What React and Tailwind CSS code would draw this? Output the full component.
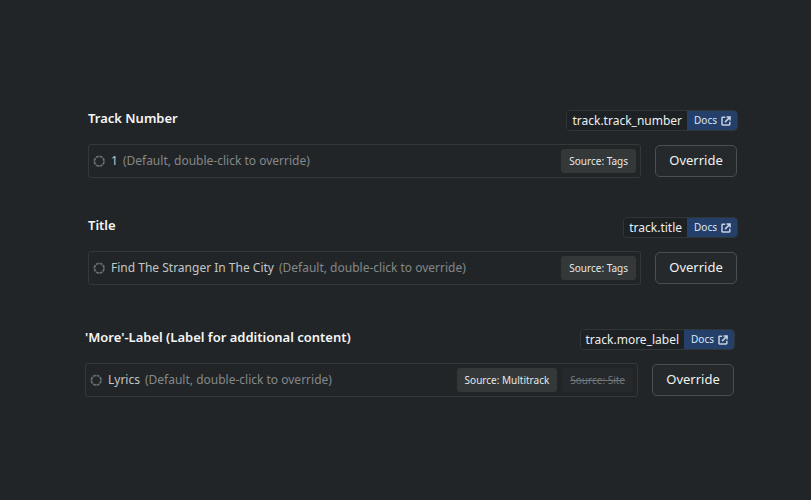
import React, { useState } from 'react';

const FIELDS = [
  {
    id: 'track_number',
    label: 'Track Number',
    value: '1',
    sources: [{ name: 'Tags', active: true }],
    className: 'pl-[88px] pr-[73px]',
  },
  {
    id: 'title',
    label: 'Title',
    value: 'Find The Stranger In The City',
    sources: [{ name: 'Tags', active: true }],
    className: 'pl-[88px] pr-[73px] mt-[39px]',
  },
  {
    id: 'more_label',
    label: "'More'-Label (Label for additional content)",
    value: 'Lyrics',
    sources: [{ name: 'Multitrack', active: true }, { name: 'Site', active: false }],
    className: 'pl-[85px] pr-[76px] mt-[44px]',
  },
];

const DashedCircle = () => (
  <svg className="shrink-0 text-[#6b6e70]" width="12" height="12" viewBox="0 0 12 12" fill="none" stroke="currentColor" strokeWidth="1.8" aria-hidden="true">
    <circle cx="6.2" cy="6.2" r="4.8" pathLength="80" strokeDasharray="8 2" strokeDashoffset="-1" />
  </svg>
);

const ExternalIcon = () => (
  <svg className="shrink-0 text-[#c5d0e0]" width="10" height="10" viewBox="0 0 10 10" fill="none" stroke="currentColor" strokeWidth="1.5" aria-hidden="true">
    <path d="M4.2 1.2H1.6a.6.6 0 0 0-.6.6v6.6a.6.6 0 0 0 .6.6h6.6a.6.6 0 0 0 .6-.6V5.8" />
    <path d="M5.5 1h3.6v3.6M9 1.1 4 6.1" />
  </svg>
);

const SourceBadge = ({ name, active }) => (
  <span className={`flex h-6 items-center rounded-[3px] px-2 text-[10px] ${active ? 'bg-[#343838] text-[#e6e8e9]' : 'bg-[#25292b] text-[#747779] line-through'}`}>
    Source: {name}
  </span>
);

const FieldRow = ({ field, onOverride }) => (
  <section className={field.className}>
    <div className="flex h-[21px] items-center justify-between">
      <h2 id={`${field.id}-label`} className="pb-1 text-[13px] leading-[17px] font-semibold text-[#f5f6f7]">{field.label}</h2>
      <div className="flex h-[21px] overflow-hidden rounded-[4px] border border-[#303538]">
        <code className="flex items-center bg-[#1d2123] px-[5px] font-['Noto_Sans',sans-serif] text-[12px] text-[#eceeef]">track.{field.id}</code>
        <a href={`#${field.id}`} className="-my-px -mr-px flex items-center gap-1 bg-[#243f69] px-[7px] text-[10px] text-[#dfe7f3]">
          Docs
          <ExternalIcon />
        </a>
      </div>
    </div>

    <div className="mt-[13px] flex items-center gap-[14px] pr-px">
      <div
        role="group"
        aria-labelledby={`${field.id}-label`}
        onDoubleClick={onOverride}
        className="flex h-[34px] min-w-0 flex-1 items-center rounded-[3px] border border-[#343839] px-1"
      >
        <DashedCircle />
        <span className="ml-[6px] text-[12px] text-[#c4c6c8]">{field.value}</span>
        <span className="ml-[5px] text-[12px] text-[#85888a]">(Default, double-click to override)</span>
        <div className="ml-auto flex gap-[5px]">
          {field.sources.map(s => <SourceBadge key={s.name} name={s.name} active={s.active} />)}
        </div>
      </div>
      <button type="button" onClick={onOverride} className="h-8 w-[82px] rounded-[5px] border border-[#4b4f51] bg-[#25292b] text-[13px] text-[#f1f2f3]">
        Override
      </button>
    </div>
  </section>
);

const App = () => {
  const [, setOverridden] = useState(null);

  return (
    <main className="min-h-screen bg-[#212527] pt-[110px] font-['Noto_Sans',sans-serif]">
      {FIELDS.map(f => <FieldRow key={f.id} field={f} onOverride={() => setOverridden(f.id)} />)}
    </main>
  );
};

export default App;
